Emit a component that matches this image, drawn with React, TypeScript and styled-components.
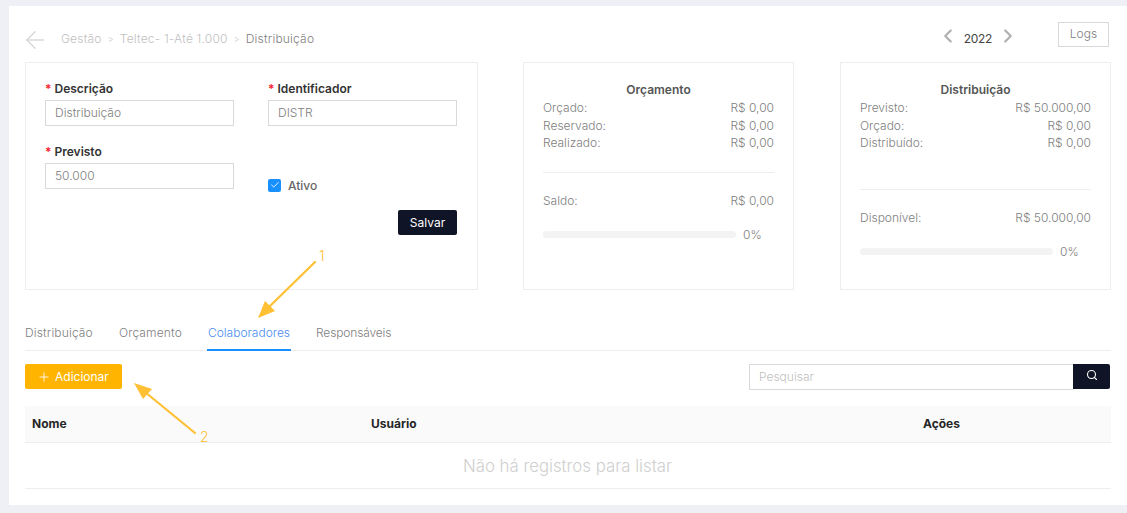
import styled, { createGlobalStyle } from 'styled-components'
import { ChevronLeft, ChevronRight, Check, Plus, Search, ArrowLeft } from 'lucide-react'

const GlobalStyle = createGlobalStyle`
  html, body {
    margin: 0;
    height: 100%;
    overflow: hidden;
    background: #eff0f5;
    font-family: Inter, "Open Sans", sans-serif;
    font-size: 12px;
    font-weight: 300;
    color: #808080;
  }
`

const Panel = styled.main`
  position: relative;
  box-sizing: border-box;
  margin: 6px 0 0 9px;
  height: 499px;
  padding: 16px 16px 0;
  background: #fff;
`

const TopBar = styled.header`
  display: flex;
  align-items: flex-start;
  height: 40px;
`

const BackButton = styled.span`
  display: flex;
  margin: 4px 12px 0 -4px;
  color: #d9d9d9;
`

const Crumbs = styled.nav`
  display: flex;
  align-items: center;
  gap: 6px;
  margin-top: 9px;
  letter-spacing: 0.2px;
  color: #bfbfbf;
`

const CrumbSep = styled.span`
  font-size: 9px;
`

const CrumbCurrent = styled.span`
  color: #808080;
`

const YearNav = styled.div`
  display: flex;
  align-items: center;
  gap: 5px;
  margin: 3px 39px 0 auto;
  letter-spacing: -0.3px;
  color: #444;
  font-weight: 400;
  svg {
    color: #b0b0b0;
    margin-bottom: 4px;
  }
`

const LogsButton = styled.button`
  box-sizing: border-box;
  width: 51px;
  height: 25px;
  margin-right: 2px;
  padding: 0 0 3px;
  border: 1px solid #d9d9d9;
  background: #fff;
  color: #808080;
  font: inherit;
`

const Cards = styled.section`
  display: flex;
  gap: 45px;
  height: 228px;
`

const Card = styled.div<{ $width: number; $push?: boolean }>`
  box-sizing: border-box;
  width: ${({ $width }) => $width}px;
  margin-left: ${({ $push }) => ($push ? 'auto' : '0')};
  border: 1px solid #eeeeee;
  padding: 19px 19px 0;
`

const FormGrid = styled.div`
  display: grid;
  grid-template-columns: 189px 189px;
  column-gap: 34px;
  grid-template-rows: 63px 63px;
`

const Field = styled.div`
  display: flex;
  flex-direction: column;
  gap: 4px;
`

const Label = styled.label`
  height: 14px;
  line-height: 14px;
  font-weight: 600;
  color: #333;
  &::before {
    content: '*';
    margin-right: 3px;
    color: #f5222d;
  }
`

const Input = styled.div`
  box-sizing: border-box;
  height: 26px;
  padding: 0 9px;
  border: 1px solid #d9d9d9;
  line-height: 23px;
`

const CheckRow = styled.div`
  display: flex;
  align-items: center;
  gap: 7px;
  margin-top: 33px;
  height: 14px;
  font-weight: 500;
  color: #666;
`

const CheckBox = styled.span`
  display: flex;
  align-items: center;
  justify-content: center;
  width: 13px;
  height: 13px;
  border-radius: 2px;
  background: #1890ff;
  color: #fff;
`

const FormActions = styled.div`
  display: flex;
  justify-content: flex-end;
  margin-top: 2px;
  margin-right: 1px;
`

const DarkButton = styled.button`
  width: 59px;
  height: 25px;
  padding: 0;
  border: 0;
  border-radius: 2px;
  background: #0f1426;
  color: #fff;
  font: inherit;
  font-weight: 400;
`

const CardTitle = styled.h3`
  margin: -1px 0 1px;
  height: 17px;
  line-height: 17px;
  text-align: center;
  font-size: 12px;
  font-weight: 600;
  color: #555;
`

const StatRow = styled.div`
  display: flex;
  justify-content: space-between;
  height: 17.5px;
  line-height: 17.5px;
`

const StatRule = styled.hr<{ $top: number }>`
  height: 1px;
  margin: ${({ $top }) => $top}px 0 19px;
  border: 0;
  background: #eeeeee;
`

const ProgressRow = styled.div`
  display: flex;
  align-items: center;
  gap: 7px;
  margin-top: 18px;
`

const ProgressTrack = styled.div`
  width: 193px;
  height: 7px;
  border-radius: 4px;
  background: #f3f3f3;
`

const Tabs = styled.div`
  display: flex;
  gap: 26px;
  height: 47px;
  margin-top: 14px;
  margin-bottom: 13px;
  border-bottom: 1px solid #eeeeee;
  box-sizing: border-box;
`

const Tab = styled.div<{ $active?: boolean; $tracking?: number }>`
  box-sizing: border-box;
  height: 47px;
  padding-top: 21px;
  margin: 0 ${({ $active }) => ($active ? '-1px' : '0')};
  padding-left: ${({ $active }) => ($active ? '1px' : '0')};
  padding-right: ${({ $active }) => ($active ? '1px' : '0')};
  letter-spacing: ${({ $tracking = 0 }) => $tracking}px;
  color: ${({ $active }) => ($active ? '#4a8df0' : '#808080')};
  border-bottom: ${({ $active }) => ($active ? '2px solid #1890ff' : '0')};
`

const Toolbar = styled.div`
  display: flex;
  justify-content: space-between;
  height: 26px;
  margin-bottom: 16px;
`

const AddButton = styled.button`
  display: flex;
  align-items: center;
  gap: 4px;
  width: 97px;
  height: 25px;
  padding: 0 0 0 12px;
  border: 0;
  border-radius: 2px;
  background: #ffb400;
  color: #fff;
  font: inherit;
  font-weight: 400;
`

const SearchBox = styled.div`
  display: flex;
  width: 361px;
  margin-right: 1px;
`

const SearchInput = styled.div`
  box-sizing: border-box;
  flex: 1;
  height: 26px;
  padding: 0 9px;
  border: 1px solid #d9d9d9;
  border-right: 0;
  line-height: 23px;
  color: #bfbfbf;
`

const SearchButton = styled.button`
  display: flex;
  align-items: center;
  justify-content: center;
  width: 37px;
  height: 25px;
  padding: 0 0 3px;
  border: 0;
  border-radius: 0 2px 2px 0;
  background: #0f1426;
  color: #fff;
`

const Table = styled.div`
  display: flex;
  flex-direction: column;
`

const TableHead = styled.div`
  display: grid;
  grid-template-columns: 339px 552px 1fr;
  align-items: center;
  box-sizing: border-box;
  height: 37px;
  padding: 0 0 2px 7px;
  background: #fafafa;
  border-bottom: 1px solid #eeeeee;
  font-weight: 700;
  color: #262626;
`

const EmptyRow = styled.div`
  box-sizing: border-box;
  height: 46px;
  padding-right: 1px;
  border-bottom: 1px solid #eeeeee;
  line-height: 46px;
  text-align: center;
  font-size: 16.8px;
  color: #cfcfcf;
`

const Annotation = styled.svg`
  position: absolute;
  left: 0;
  top: 0;
  width: 1127px;
  height: 513px;
  pointer-events: none;
`

function Stat({ label, value }: { label: string; value: string }) {
  return (
    <StatRow>
      <span>{label}</span>
      <span>{value}</span>
    </StatRow>
  )
}

export default function App() {
  return (
    <>
      <GlobalStyle />
      <Panel>
        <TopBar>
          <BackButton>
            <ArrowLeft size={28} strokeWidth={1.3} />
          </BackButton>
          <Crumbs>
            <span>Gestão</span>
            <CrumbSep>&gt;</CrumbSep>
            <span>Teltec- 1-Até 1.000</span>
            <CrumbSep>&gt;</CrumbSep>
            <CrumbCurrent>Distribuição</CrumbCurrent>
          </Crumbs>
          <YearNav>
            <ChevronLeft size={22} strokeWidth={2.4} />
            <span>2022</span>
            <ChevronRight size={22} strokeWidth={2.4} />
          </YearNav>
          <LogsButton>Logs</LogsButton>
        </TopBar>

        <Cards>
          <Card $width={453}>
            <FormGrid>
              <Field>
                <Label>Descrição</Label>
                <Input>Distribuição</Input>
              </Field>
              <Field>
                <Label>Identificador</Label>
                <Input>DISTR</Input>
              </Field>
              <Field>
                <Label>Previsto</Label>
                <Input>50.000</Input>
              </Field>
              <CheckRow>
                <CheckBox>
                  <Check size={10} strokeWidth={2} />
                </CheckBox>
                Ativo
              </CheckRow>
            </FormGrid>
            <FormActions>
              <DarkButton>Salvar</DarkButton>
            </FormActions>
          </Card>

          <Card $width={271}>
            <CardTitle>Orçamento</CardTitle>
            <Stat label="Orçado:" value="R$ 0,00" />
            <Stat label="Reservado:" value="R$ 0,00" />
            <Stat label="Realizado:" value="R$ 0,00" />
            <StatRule $top={20} />
            <Stat label="Saldo:" value="R$ 0,00" />
            <ProgressRow>
              <ProgressTrack />
              <span>0%</span>
            </ProgressRow>
          </Card>

          <Card $width={271} $push>
            <CardTitle>Distribuição</CardTitle>
            <Stat label="Previsto:" value="R$ 50.000,00" />
            <Stat label="Orçado:" value="R$ 0,00" />
            <Stat label="Distribuído:" value="R$ 0,00" />
            <StatRule $top={37} />
            <Stat label="Disponível:" value="R$ 50.000,00" />
            <ProgressRow>
              <ProgressTrack />
              <span>0%</span>
            </ProgressRow>
          </Card>
        </Cards>

        <Tabs>
          <Tab $tracking={0.15}>Distribuição</Tab>
          <Tab $tracking={0.15}>Orçamento</Tab>
          <Tab $active>Colaboradores</Tab>
          <Tab $tracking={-0.15}>Responsáveis</Tab>
        </Tabs>

        <Toolbar>
          <AddButton>
            <Plus size={14} strokeWidth={1.5} />
            Adicionar
          </AddButton>
          <SearchBox>
            <SearchInput>Pesquisar</SearchInput>
            <SearchButton>
              <Search size={12} strokeWidth={2.2} />
            </SearchButton>
          </SearchBox>
        </Toolbar>

        <Table>
          <TableHead>
            <span>Nome</span>
            <span>Usuário</span>
            <span>Ações</span>
          </TableHead>
          <EmptyRow>Não há registros para listar</EmptyRow>
        </Table>
      </Panel>

      <Annotation viewBox="0 0 1127 513">
        <g stroke="#ffc033" strokeWidth="2.2" strokeLinecap="round">
          <line x1="315" y1="262" x2="268" y2="308" />
          <line x1="195" y1="433" x2="145" y2="392" />
        </g>
        <polygon points="258,318 265,301 275,311" fill="#ffc033" />
        <polygon points="134,383 152,389 143,399" fill="#ffc033" />
        <g fill="#ffc033" fontFamily="Inter, sans-serif" fontSize="14" fontWeight="300">
          <text x="319" y="261">1</text>
          <text x="200" y="442">2</text>
        </g>
      </Annotation>
    </>
  )
}
